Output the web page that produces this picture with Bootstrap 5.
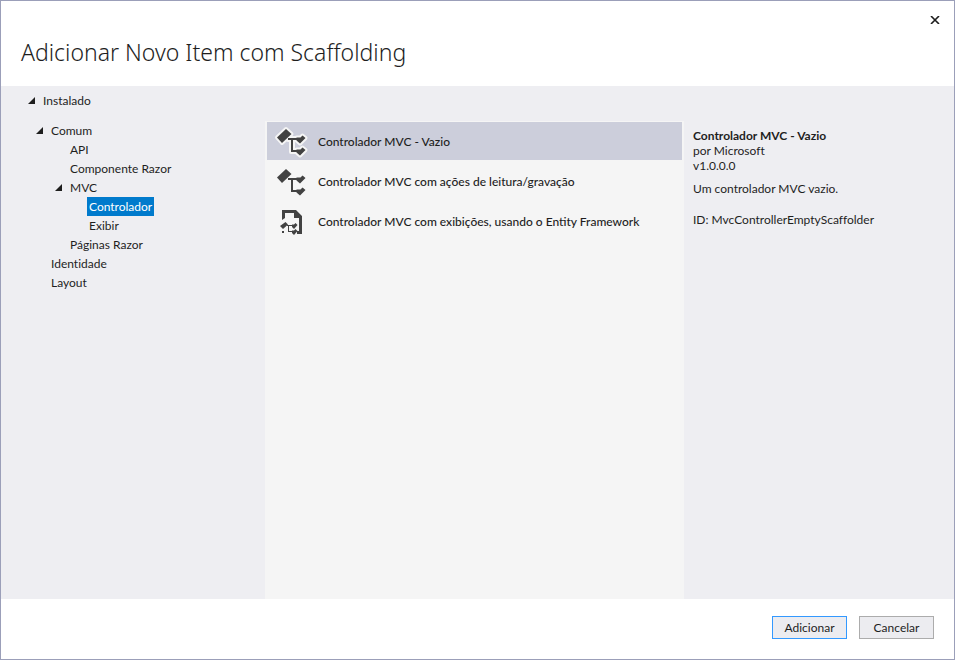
<!DOCTYPE html>
<html lang="pt-BR">
<head>
<meta charset="utf-8">
<meta name="viewport" content="width=device-width, initial-scale=1">
<title>Adicionar Novo Item com Scaffolding</title>
<link href="https://cdn.jsdelivr.net/npm/bootstrap@5.3.0/dist/css/bootstrap.min.css" rel="stylesheet">
<style>
body { font-family: "Segoe UI", Lato, sans-serif; font-variant-ligatures: none; font-size: 12px; line-height: 19px; color: #1e1e1e; background: #fff; }
.dialog-window { min-height: calc(100vh - 2px); margin: 0 1px 2px 0; border: 1px solid #9b9fb9; }
.dialog-header { height: 85px; padding: 0 20px 19px; }
.dialog-title { font-family: "Segoe UI Light", "Noto Sans", sans-serif; font-weight: 300; font-size: 23px; line-height: 30px; }
.close-button { top: 9px; right: 9px; width: 20px; height: 20px; color: #1e1e1e; }
.dialog-body { background: #eeeef2; }
.tree-pane { width: 264px; padding: 5px 0 0 26px; }
.details-pane { width: 270px; padding: 42px 8px 0 9px; line-height: 15px; }
.list-pane { margin-top: 35px; padding: 1px 2px; background: #f5f5f5; }
.tree-toggle { width: 14px; height: 19px; color: #1e1e1e; }
.tree-link { padding: 0 2px; color: #1e1e1e; text-decoration: none; }
.tree-link.active { background: #007acc; color: #fff; }
.level-1 { margin: 11px 0 0 8px; }
.level-2 { margin-left: 19px; }
.level-3 { margin-left: 19px; }
.tree-leaf { padding-left: 14px; }
.template-row { height: 38px; padding: 0 8px; margin-bottom: 2px; gap: 11px; color: #1e1e1e; background: transparent; font-weight: 500; text-align: left; }
.template-row.active { background: #cccedb; }
.dialog-footer { height: 60px; padding: 0 20px 4px; gap: 12px; }
.dialog-button { width: 75px; height: 23px; border: 1px solid #acacac; background: #ececf0; color: #1e1e1e; font-size: 12px; line-height: 19px; }
.dialog-button.default-action { border-color: #3399ff; }
</style>
<script src="https://cdn.jsdelivr.net/npm/bootstrap@5.3.0/dist/js/bootstrap.bundle.min.js" defer></script>
</head>
<body>
<svg class="d-none" aria-hidden="true">
  <symbol id="arrow" viewBox="0 0 8 8"><path d="M8 0v7H1z" fill="#1e1e1e"/></symbol>
  <symbol id="controller-shape" viewBox="0 -1 32 32" overflow="visible">
    <path d="M11 3 16.500 8 7 17 2 11.500z"/>
    <path d="M13 12h11v2h-6v10h6v2h-8V14h-3z"/>
    <path d="M27.500 9.500 30.500 12 25 17.500 21.500 14.500V11.500h4z"/>
    <path d="M27.500 21.500 30.500 24 25 29.500 21.500 26.500V23.500h4z"/>
  </symbol>
</svg>
<main class="dialog-window d-flex flex-column">
  <header class="dialog-header position-relative d-flex align-items-end">
    <h1 class="dialog-title m-0">Adicionar Novo Item com Scaffolding</h1>
    <button type="button" class="close-button btn p-0 border-0 rounded-0 position-absolute d-flex align-items-center justify-content-center" aria-label="Fechar">
      <svg width="10" height="8" viewBox="0 0 10 8"><path d="M1 0l8 8M9 0 1 8" stroke="#1e1e1e" stroke-width="1.600"/></svg>
    </button>
  </header>
  <div class="dialog-body d-flex flex-grow-1">
    <nav class="tree-pane flex-shrink-0" aria-label="Categorias">
      <ul class="list-unstyled m-0">
        <li>
          <div class="d-flex">
            <button type="button" class="tree-toggle btn p-0 border-0 rounded-0 d-flex align-items-center" aria-label="Recolher Instalado"><svg width="8" height="8"><use href="#arrow"/></svg></button>
            <a href="#" class="tree-link">Instalado</a>
          </div>
          <ul class="level-1 list-unstyled">
            <li>
              <div class="d-flex">
                <button type="button" class="tree-toggle btn p-0 border-0 rounded-0 d-flex align-items-center" aria-label="Recolher Comum"><svg width="8" height="8"><use href="#arrow"/></svg></button>
                <a href="#" class="tree-link">Comum</a>
              </div>
              <ul class="level-2 list-unstyled">
                <li class="tree-leaf d-flex"><a href="#" class="tree-link">API</a></li>
                <li class="tree-leaf d-flex"><a href="#" class="tree-link">Componente Razor</a></li>
                <li>
                  <div class="d-flex">
                    <button type="button" class="tree-toggle btn p-0 border-0 rounded-0 d-flex align-items-center" aria-label="Recolher MVC"><svg width="8" height="8"><use href="#arrow"/></svg></button>
                    <a href="#" class="tree-link">MVC</a>
                  </div>
                  <ul class="level-3 list-unstyled">
                    <li class="tree-leaf d-flex"><a href="#" class="tree-link active" aria-current="true">Controlador</a></li>
                    <li class="tree-leaf d-flex"><a href="#" class="tree-link">Exibir</a></li>
                  </ul>
                </li>
                <li class="tree-leaf d-flex"><a href="#" class="tree-link">Páginas Razor</a></li>
              </ul>
            </li>
            <li class="tree-leaf d-flex"><a href="#" class="tree-link">Identidade</a></li>
            <li class="tree-leaf d-flex"><a href="#" class="tree-link">Layout</a></li>
          </ul>
        </li>
      </ul>
    </nav>
    <section class="list-pane flex-grow-1" aria-label="Modelos">
      <button type="button" class="template-row active w-100 border-0 d-flex align-items-center">
        <svg class="flex-shrink-0 overflow-visible" width="32" height="32" viewBox="0 0 32 32" fill="#424242"><use href="#controller-shape" stroke="#f5f5f5" stroke-width="4" stroke-linejoin="round"/><use href="#controller-shape"/></svg>
        <span>Controlador MVC - Vazio</span>
      </button>
      <button type="button" class="template-row w-100 border-0 d-flex align-items-center">
        <svg class="flex-shrink-0" width="32" height="32" viewBox="0 0 32 32" fill="#424242"><use href="#controller-shape"/></svg>
        <span>Controlador MVC com ações de leitura/gravação</span>
      </button>
      <button type="button" class="template-row w-100 border-0 d-flex align-items-center">
        <svg class="flex-shrink-0" width="32" height="32" viewBox="0 -1 32 32" fill="#424242">
          <path d="M7 4h14l6 6v18h-5v-3h2V12h-5V7h-9v5l-3 2z"/>
          <path d="M10.500 16 13 18.500 8 23 5 20z"/>
          <path d="M12 19h6v1h-4v5h4v1h-5v-6h-1z"/>
          <path d="M17 18.500h2l1.500-1.500 2 2-3.500 4-2-2zM17 24.500h2l1.500-1.500 2 2-3.500 4-2-2zM7 25h2v2H7z"/>
        </svg>
        <span>Controlador MVC com exibições, usando o Entity Framework</span>
      </button>
    </section>
    <aside class="details-pane flex-shrink-0" aria-label="Detalhes">
      <div class="fw-bold">Controlador MVC - Vazio</div>
      <div>por Microsoft</div>
      <div>v1.0.0.0</div>
      <p class="mt-2 mb-3">Um controlador MVC vazio.</p>
      <div>ID: MvcControllerEmptyScaffolder</div>
    </aside>
  </div>
  <footer class="dialog-footer d-flex justify-content-end align-items-center">
    <button type="button" class="dialog-button default-action btn rounded-0 p-0 d-flex align-items-center justify-content-center">Adicionar</button>
    <button type="button" class="dialog-button btn rounded-0 p-0 d-flex align-items-center justify-content-center">Cancelar</button>
  </footer>
</main>
</body>
</html>
